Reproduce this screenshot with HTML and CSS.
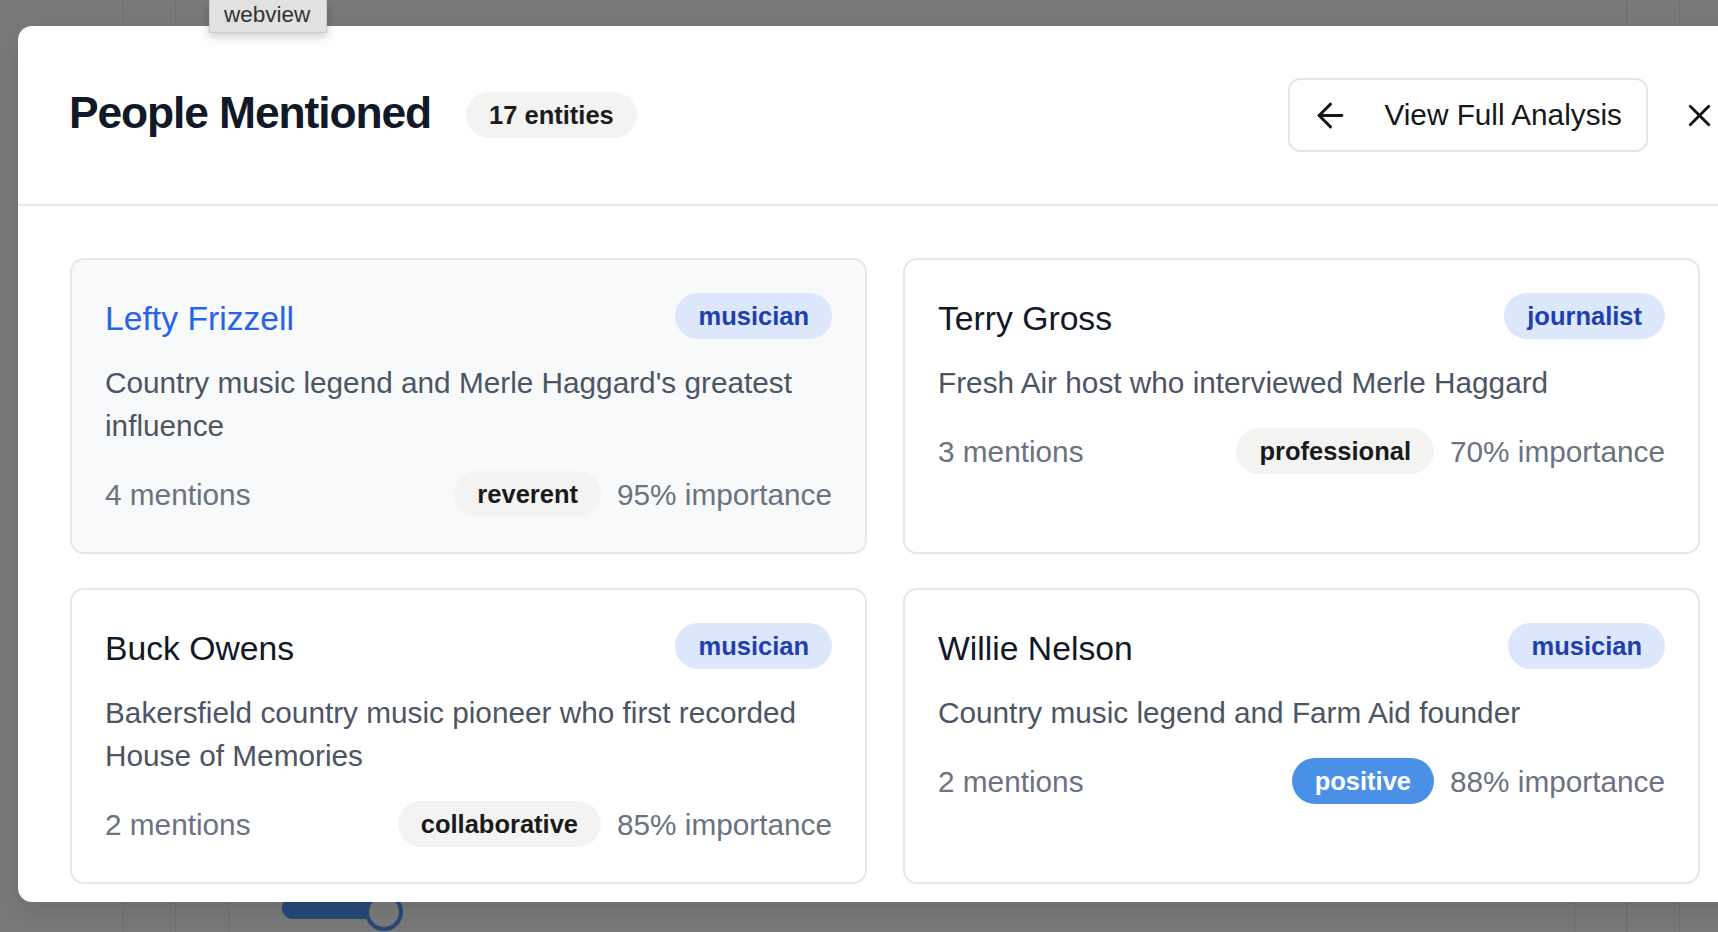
FILE: index.html
```html
<!DOCTYPE html>
<html lang="en">
<head>
<meta charset="utf-8">
<title>People Mentioned</title>
<link rel="stylesheet" href="styles.css">
</head>
<body>
  <div class="page">
    <div class="toggle">
      <span class="toggle-track"></span>
      <span class="toggle-knob"></span>
    </div>
  </div>

  <div class="tooltip">webview</div>

  <div class="modal" role="dialog" aria-labelledby="modal-title">
    <header class="modal-header">
      <div class="title-group">
        <h2 class="title" id="modal-title">People Mentioned</h2>
        <span class="count">17 entities</span>
      </div>
      <div class="actions">
        <button class="btn-outline" type="button">
          <svg class="icon-arrow" viewBox="0 0 24 24" fill="none" stroke="currentColor" stroke-width="1.8" stroke-linecap="round" stroke-linejoin="round"><path d="m12 19-7-7 7-7"/><path d="M19 12H5"/></svg>
          <span>View Full Analysis</span>
        </button>
        <button class="btn-close" type="button" aria-label="Close">
          <svg viewBox="0 0 24 24" fill="none" stroke="currentColor" stroke-width="1.8" stroke-linecap="round" stroke-linejoin="round"><path d="M18 6 6 18"/><path d="m6 6 12 12"/></svg>
        </button>
      </div>
    </header>

    <div class="modal-body">
      <div class="grid">
        <article class="card card-active">
          <div class="card-head">
            <h3 class="name name-link">Lefty Frizzell</h3>
            <span class="role">musician</span>
          </div>
          <p class="desc">Country music legend and Merle Haggard's greatest influence</p>
          <div class="meta">
            <span class="mentions">4 mentions</span>
            <span class="sentiment">reverent</span>
            <span class="importance">95% importance</span>
          </div>
        </article>

        <article class="card">
          <div class="card-head">
            <h3 class="name">Terry Gross</h3>
            <span class="role">journalist</span>
          </div>
          <p class="desc">Fresh Air host who interviewed Merle Haggard</p>
          <div class="meta">
            <span class="mentions">3 mentions</span>
            <span class="sentiment">professional</span>
            <span class="importance">70% importance</span>
          </div>
        </article>

        <article class="card">
          <div class="card-head">
            <h3 class="name">Buck Owens</h3>
            <span class="role">musician</span>
          </div>
          <p class="desc">Bakersfield country music pioneer who first recorded House of Memories</p>
          <div class="meta">
            <span class="mentions">2 mentions</span>
            <span class="sentiment">collaborative</span>
            <span class="importance">85% importance</span>
          </div>
        </article>

        <article class="card">
          <div class="card-head">
            <h3 class="name">Willie Nelson</h3>
            <span class="role">musician</span>
          </div>
          <p class="desc">Country music legend and Farm Aid founder</p>
          <div class="meta">
            <span class="mentions">2 mentions</span>
            <span class="sentiment sentiment-positive">positive</span>
            <span class="importance">88% importance</span>
          </div>
        </article>
      </div>
    </div>
  </div>
</body>
</html>
```

FILE: styles.css
```css
html, body {
  margin: 0;
  height: 100%;
  overflow: hidden;
}

body {
  font-family: "Liberation Sans", Arial, Helvetica, sans-serif;
  background: #7a7a7a;
  position: relative;
}

.page {
  position: absolute;
  inset: 0;
  background-color: #7a7a7a;
  background-image:
    linear-gradient(90deg, #6e6e6e, #6e6e6e),
    linear-gradient(90deg,
      transparent 123px, #6e6e6e 123px 124px,
      transparent 124px 175px, #6e6e6e 175px 176px,
      transparent 176px 228px, #6e6e6e 228px 229px,
      transparent 229px 1626px, #6e6e6e 1626px 1627px,
      transparent 1627px 1679px, #6e6e6e 1679px 1680px,
      transparent 1680px);
  background-repeat: no-repeat, no-repeat;
  background-size: 1px 120px, 100% 100%;
  background-position: 1574px 820px, 0 0;
}

.toggle {
  position: absolute;
  left: 282px;
  top: 893px;
  width: 122px;
  height: 38px;
}

.toggle-track {
  position: absolute;
  left: 0;
  top: 4px;
  width: 100px;
  height: 22px;
  border-radius: 11px;
  background: #264a7b;
}

.toggle-knob {
  position: absolute;
  left: 83px;
  top: 0;
  width: 38px;
  height: 38px;
  box-sizing: border-box;
  border: 4px solid #27497a;
  border-radius: 50%;
  background: #7c7c7c;
}

.tooltip {
  position: absolute;
  left: 209px;
  top: 0;
  z-index: 10;
  height: 33px;
  box-sizing: border-box;
  padding: 0 16px 4px 14px;
  line-height: 29px;
  font-size: 22.5px;
  color: #333;
  background: #e1e1e1;
  border: 1px solid #cdcdcd;
  border-top: none;
  box-shadow: 0 3px 10px rgba(0, 0, 0, 0.22);
}

.modal {
  position: absolute;
  left: 18px;
  top: 26px;
  width: 1743px;
  height: 876px;
  background: #fff;
  border-radius: 14px;
  display: flex;
  flex-direction: column;
  overflow: hidden;
  box-shadow: 0 10px 30px rgba(0, 0, 0, 0.12);
}

.modal-header {
  display: flex;
  align-items: center;
  justify-content: space-between;
  padding: 52px 43px 52px 51px;
  border-bottom: 2px solid #e5e7eb;
  flex: none;
}

.title-group {
  display: flex;
  align-items: center;
  gap: 35px;
}

.title {
  margin: 0 0 4px;
  font-size: 44.4px;
  font-weight: 700;
  letter-spacing: -0.025em;
  line-height: 1.2;
  color: #111827;
}

.count {
  background: #f3f3f2;
  color: #1c1c1c;
  font-size: 25.5px;
  font-weight: 700;
  line-height: 36.6px;
  padding: 5px 23px;
  border-radius: 999px;
}

.actions {
  display: flex;
  align-items: center;
  gap: 33px;
}

.btn-outline {
  display: flex;
  align-items: center;
  gap: 34px;
  height: 74px;
  box-sizing: border-box;
  padding: 0 24px 0 21px;
  border: 2px solid #e5e5e5;
  border-radius: 12px;
  background: #fff;
  font-family: inherit;
  font-size: 29.75px;
  color: #171717;
  cursor: pointer;
}

.icon-arrow {
  width: 39px;
  height: 39px;
  flex: none;
}

.btn-close {
  display: flex;
  padding: 0;
  border: none;
  background: none;
  color: #111;
  cursor: pointer;
}

.btn-close svg {
  width: 37px;
  height: 37px;
}

.modal-body {
  flex: 1;
  overflow: hidden;
  padding: 52px 61px 52px 52px;
}

.grid {
  display: grid;
  grid-template-columns: 1fr 1fr;
  column-gap: 36px;
  row-gap: 34px;
}

.card {
  border: 2px solid #e5e7eb;
  border-radius: 14px;
  padding: 33px 33px 35px;
  background: #fff;
}

.card-active {
  background: #f8f9fb;
}

.card-head {
  display: flex;
  align-items: center;
  justify-content: space-between;
  min-height: 46px;
}

.name {
  margin: 4px 0 0;
  font-size: 33.7px;
  font-weight: 400;
  line-height: 42px;
  color: #111827;
}

.name-link {
  color: #2563eb;
}

.role {
  background: #dde7fb;
  color: #1e40af;
  font-size: 25.5px;
  font-weight: 700;
  line-height: 36px;
  padding: 5px 23px;
  border-radius: 999px;
}

.desc {
  margin: 22px 0 0;
  font-size: 29.75px;
  line-height: 43px;
  color: #4b5563;
}

.meta {
  display: flex;
  align-items: center;
  margin-top: 24px;
  font-size: 29.75px;
  line-height: 43px;
  color: #6b7280;
}

.mentions {
  margin-right: auto;
}

.sentiment {
  background: #f3f3f2;
  color: #1a1a1a;
  font-size: 25.5px;
  font-weight: 700;
  line-height: 36px;
  padding: 5px 23px;
  border-radius: 999px;
  margin-right: 16px;
}

.sentiment-positive {
  background: #4a90e6;
  color: #fff;
}
```
